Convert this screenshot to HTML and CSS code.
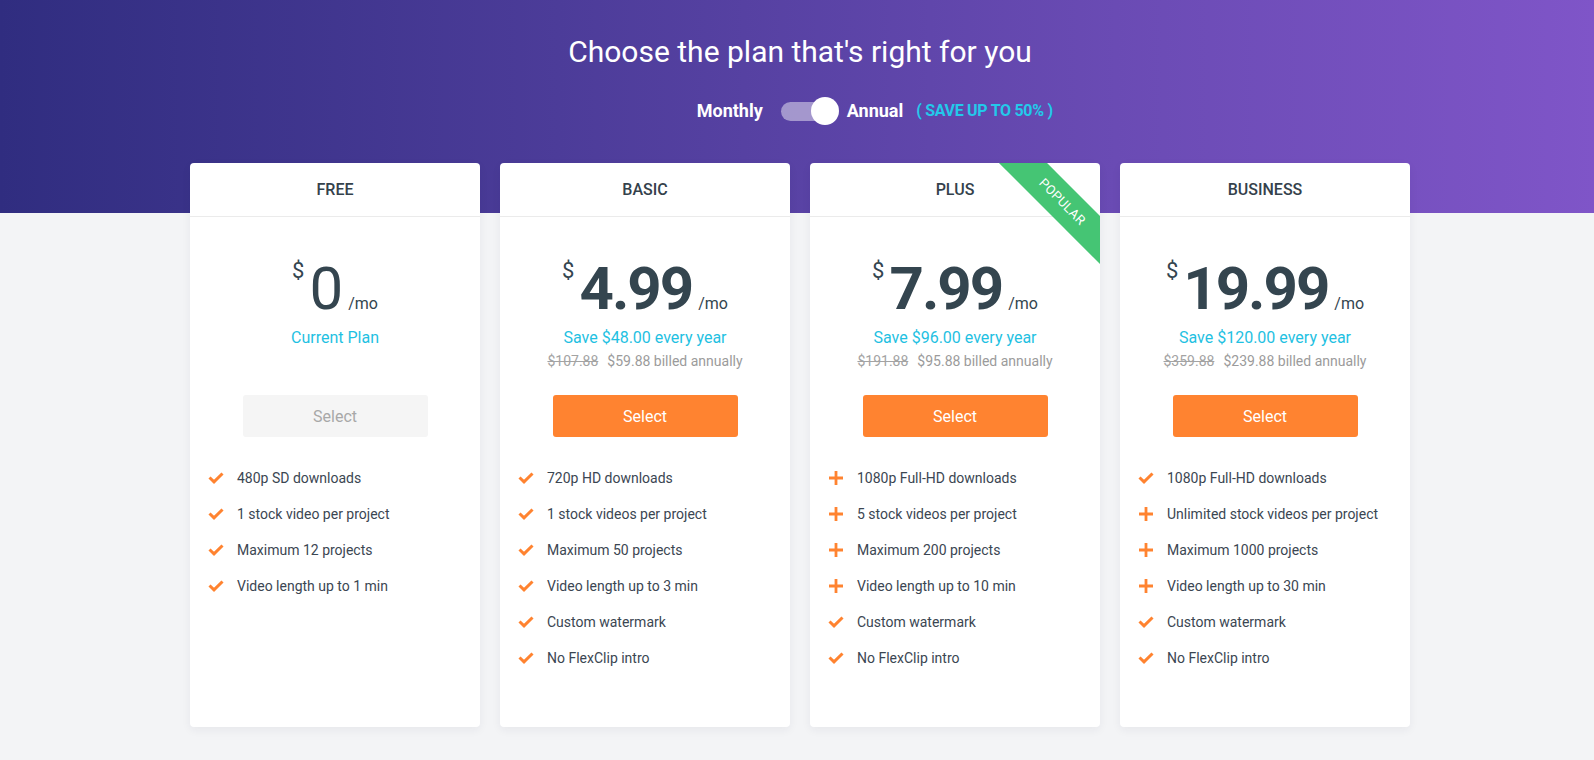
FILE: index.html
```html
<!DOCTYPE html>
<html lang="en">
<head>
<meta charset="utf-8">
<title>Pricing</title>
<link rel="stylesheet" href="styles.css">
</head>
<body>
<div class="page">
  <header class="hero">
    <div class="wrap">
      <h1 class="title">Choose the plan that's right for you</h1>
      <div class="billing">
        <div class="toggle-group">
          <span class="label">Monthly</span>
          <span class="switch"><span class="knob"></span></span>
          <span class="label">Annual</span>
          <span class="save-badge">( SAVE UP TO 50% )</span>
        </div>
      </div>
    </div>
  </header>

  <main class="wrap plans">
    <section class="card">
      <div class="card-head">FREE</div>
      <div class="price-box">
        <div class="price free"><span class="cur">$</span><span class="amt">0</span><span class="per">/mo</span></div>
        <div class="save-line">Current Plan</div>
        <div class="billed"></div>
        <button class="btn disabled">Select</button>
      </div>
      <ul class="features">
        <li><svg class="ico" viewBox="0 0 16 12"><path d="M1.5 5.5 L6 9.8 L14.5 1.5" /></svg>480p SD downloads</li>
        <li><svg class="ico" viewBox="0 0 16 12"><path d="M1.5 5.5 L6 9.8 L14.5 1.5" /></svg>1 stock video per project</li>
        <li><svg class="ico" viewBox="0 0 16 12"><path d="M1.5 5.5 L6 9.8 L14.5 1.5" /></svg>Maximum 12 projects</li>
        <li><svg class="ico" viewBox="0 0 16 12"><path d="M1.5 5.5 L6 9.8 L14.5 1.5" /></svg>Video length up to 1 min</li>
      </ul>
    </section>

    <section class="card">
      <div class="card-head">BASIC</div>
      <div class="price-box">
        <div class="price"><span class="cur">$</span><span class="amt">4.99</span><span class="per">/mo</span></div>
        <div class="save-line">Save $48.00 every year</div>
        <div class="billed"><del>$107.88</del>$59.88 billed annually</div>
        <button class="btn">Select</button>
      </div>
      <ul class="features">
        <li><svg class="ico" viewBox="0 0 16 12"><path d="M1.5 5.5 L6 9.8 L14.5 1.5" /></svg>720p HD downloads</li>
        <li><svg class="ico" viewBox="0 0 16 12"><path d="M1.5 5.5 L6 9.8 L14.5 1.5" /></svg>1 stock videos per project</li>
        <li><svg class="ico" viewBox="0 0 16 12"><path d="M1.5 5.5 L6 9.8 L14.5 1.5" /></svg>Maximum 50 projects</li>
        <li><svg class="ico" viewBox="0 0 16 12"><path d="M1.5 5.5 L6 9.8 L14.5 1.5" /></svg>Video length up to 3 min</li>
        <li><svg class="ico" viewBox="0 0 16 12"><path d="M1.5 5.5 L6 9.8 L14.5 1.5" /></svg>Custom watermark</li>
        <li><svg class="ico" viewBox="0 0 16 12"><path d="M1.5 5.5 L6 9.8 L14.5 1.5" /></svg>No FlexClip intro</li>
      </ul>
    </section>

    <section class="card">
      <div class="ribbon">POPULAR</div>
      <div class="card-head">PLUS</div>
      <div class="price-box">
        <div class="price"><span class="cur">$</span><span class="amt">7.99</span><span class="per">/mo</span></div>
        <div class="save-line">Save $96.00 every year</div>
        <div class="billed"><del>$191.88</del>$95.88 billed annually</div>
        <button class="btn">Select</button>
      </div>
      <ul class="features">
        <li><svg class="ico plus" viewBox="0 0 16 16"><path d="M8 1 V15 M1 8 H15" /></svg>1080p Full-HD downloads</li>
        <li><svg class="ico plus" viewBox="0 0 16 16"><path d="M8 1 V15 M1 8 H15" /></svg>5 stock videos per project</li>
        <li><svg class="ico plus" viewBox="0 0 16 16"><path d="M8 1 V15 M1 8 H15" /></svg>Maximum 200 projects</li>
        <li><svg class="ico plus" viewBox="0 0 16 16"><path d="M8 1 V15 M1 8 H15" /></svg>Video length up to 10 min</li>
        <li><svg class="ico" viewBox="0 0 16 12"><path d="M1.5 5.5 L6 9.8 L14.5 1.5" /></svg>Custom watermark</li>
        <li><svg class="ico" viewBox="0 0 16 12"><path d="M1.5 5.5 L6 9.8 L14.5 1.5" /></svg>No FlexClip intro</li>
      </ul>
    </section>

    <section class="card">
      <div class="card-head">BUSINESS</div>
      <div class="price-box">
        <div class="price"><span class="cur">$</span><span class="amt">19.99</span><span class="per">/mo</span></div>
        <div class="save-line">Save $120.00 every year</div>
        <div class="billed"><del>$359.88</del>$239.88 billed annually</div>
        <button class="btn">Select</button>
      </div>
      <ul class="features">
        <li><svg class="ico" viewBox="0 0 16 12"><path d="M1.5 5.5 L6 9.8 L14.5 1.5" /></svg>1080p Full-HD downloads</li>
        <li><svg class="ico plus" viewBox="0 0 16 16"><path d="M8 1 V15 M1 8 H15" /></svg>Unlimited stock videos per project</li>
        <li><svg class="ico plus" viewBox="0 0 16 16"><path d="M8 1 V15 M1 8 H15" /></svg>Maximum 1000 projects</li>
        <li><svg class="ico plus" viewBox="0 0 16 16"><path d="M8 1 V15 M1 8 H15" /></svg>Video length up to 30 min</li>
        <li><svg class="ico" viewBox="0 0 16 12"><path d="M1.5 5.5 L6 9.8 L14.5 1.5" /></svg>Custom watermark</li>
        <li><svg class="ico" viewBox="0 0 16 12"><path d="M1.5 5.5 L6 9.8 L14.5 1.5" /></svg>No FlexClip intro</li>
      </ul>
    </section>
  </main>
</div>
</body>
</html>
```

FILE: styles.css
```css
* { box-sizing: border-box; }

html, body {
  margin: 0;
  padding: 0;
}

body {
  font-family: Roboto, "Liberation Sans", Arial, sans-serif;
  background: #f3f4f6;
  overflow: hidden;
}

.page {
  min-height: 760px;
  background:
    linear-gradient(90deg, #302d80 0%, #4c3c99 35%, #6a4bb4 70%, #7f55c8 100%) top left / 100% 213px no-repeat,
    #f3f4f6;
}

.wrap {
  width: 1226px;
  padding-left: 6px;
  margin: 0 auto;
}

.hero {
  height: 163px;
  padding-top: 34px;
}

.title {
  margin: 0;
  font-size: 30px;
  line-height: 36px;
  font-weight: 400;
  color: #ffffff;
  text-align: center;
}

.billing {
  display: flex;
  justify-content: center;
  margin-top: 27px;
}

.toggle-group {
  position: relative;
  display: flex;
  align-items: center;
  height: 28px;
}

.label {
  font-size: 18px;
  font-weight: 700;
  color: #ffffff;
  line-height: 28px;
}

.switch {
  position: relative;
  width: 50px;
  height: 19px;
  border-radius: 10px;
  background: rgba(255, 255, 255, 0.45);
  margin: 0 16px 0 18px;
}

.knob {
  position: absolute;
  left: 30px;
  top: -4.5px;
  width: 28px;
  height: 28px;
  border-radius: 50%;
  background: #ffffff;
}

.save-badge {
  position: absolute;
  left: 100%;
  top: 0;
  margin-left: 13px;
  white-space: nowrap;
  font-size: 16px;
  font-weight: 700;
  letter-spacing: -0.3px;
  line-height: 28px;
  color: #23c9ea;
}

.plans {
  display: grid;
  grid-template-columns: repeat(4, 290px);
  column-gap: 20px;
}

.card {
  position: relative;
  overflow: hidden;
  height: 564px;
  background: #ffffff;
  border-radius: 4px;
  box-shadow: 0 3px 10px rgba(30, 40, 60, 0.06);
}

.card-head {
  height: 54px;
  border-bottom: 1px solid #ebebeb;
  display: flex;
  align-items: center;
  justify-content: center;
  font-size: 16px;
  font-weight: 500;
  color: #34414b;
}

.ribbon {
  position: absolute;
  top: 21.5px;
  right: -41.5px;
  width: 160px;
  height: 34px;
  transform: rotate(45deg);
  background: #45c574;
  color: #ffffff;
  font-size: 13px;
  line-height: 34px;
  text-align: center;
  letter-spacing: 0.3px;
}

.price-box {
  padding-top: 40px;
  text-align: center;
}

.price {
  height: 64px;
  line-height: 64px;
  font-size: 60px;
  font-weight: 700;
  color: #34454f;
  white-space: nowrap;
}

.amt {
  letter-spacing: -2px;
}

.price.free .amt {
  font-weight: 400;
  letter-spacing: 0;
}

.cur {
  font-size: 22px;
  font-weight: 400;
  line-height: 1;
  vertical-align: 31px;
  margin-right: 5px;
}

.per {
  font-size: 16px;
  font-weight: 400;
  line-height: 1;
  margin-left: 6px;
}

.price.free .per {
  margin-left: 5px;
}

.save-line {
  margin-top: 6px;
  font-size: 16px;
  line-height: 22px;
  color: #1fc1e2;
}

.billed {
  margin-top: 1px;
  min-height: 22px;
  font-size: 14px;
  line-height: 22px;
  color: #9b9b9b;
}

.billed del {
  color: #a3a3a3;
  margin-right: 9px;
}

.btn {
  display: block;
  width: 185px;
  height: 42px;
  margin: 23px auto 0;
  border: none;
  border-radius: 3px;
  background: #ff8330;
  color: #ffffff;
  font-family: Roboto, "Liberation Sans", Arial, sans-serif;
  font-size: 16px;
  cursor: pointer;
}

.btn.disabled {
  background: #f5f5f5;
  color: #a8a8a8;
}

.features {
  list-style: none;
  margin: 23px 0 0;
  padding: 0 18px;
}

.features li {
  display: flex;
  align-items: center;
  height: 36px;
  font-size: 14px;
  color: #3b4652;
  white-space: nowrap;
}

.ico {
  flex: none;
  width: 16px;
  height: 12px;
  margin-right: 13px;
  fill: none;
  stroke: #ff8330;
  stroke-width: 3;
}

.ico.plus {
  height: 16px;
  stroke-width: 2.8;
}
```
